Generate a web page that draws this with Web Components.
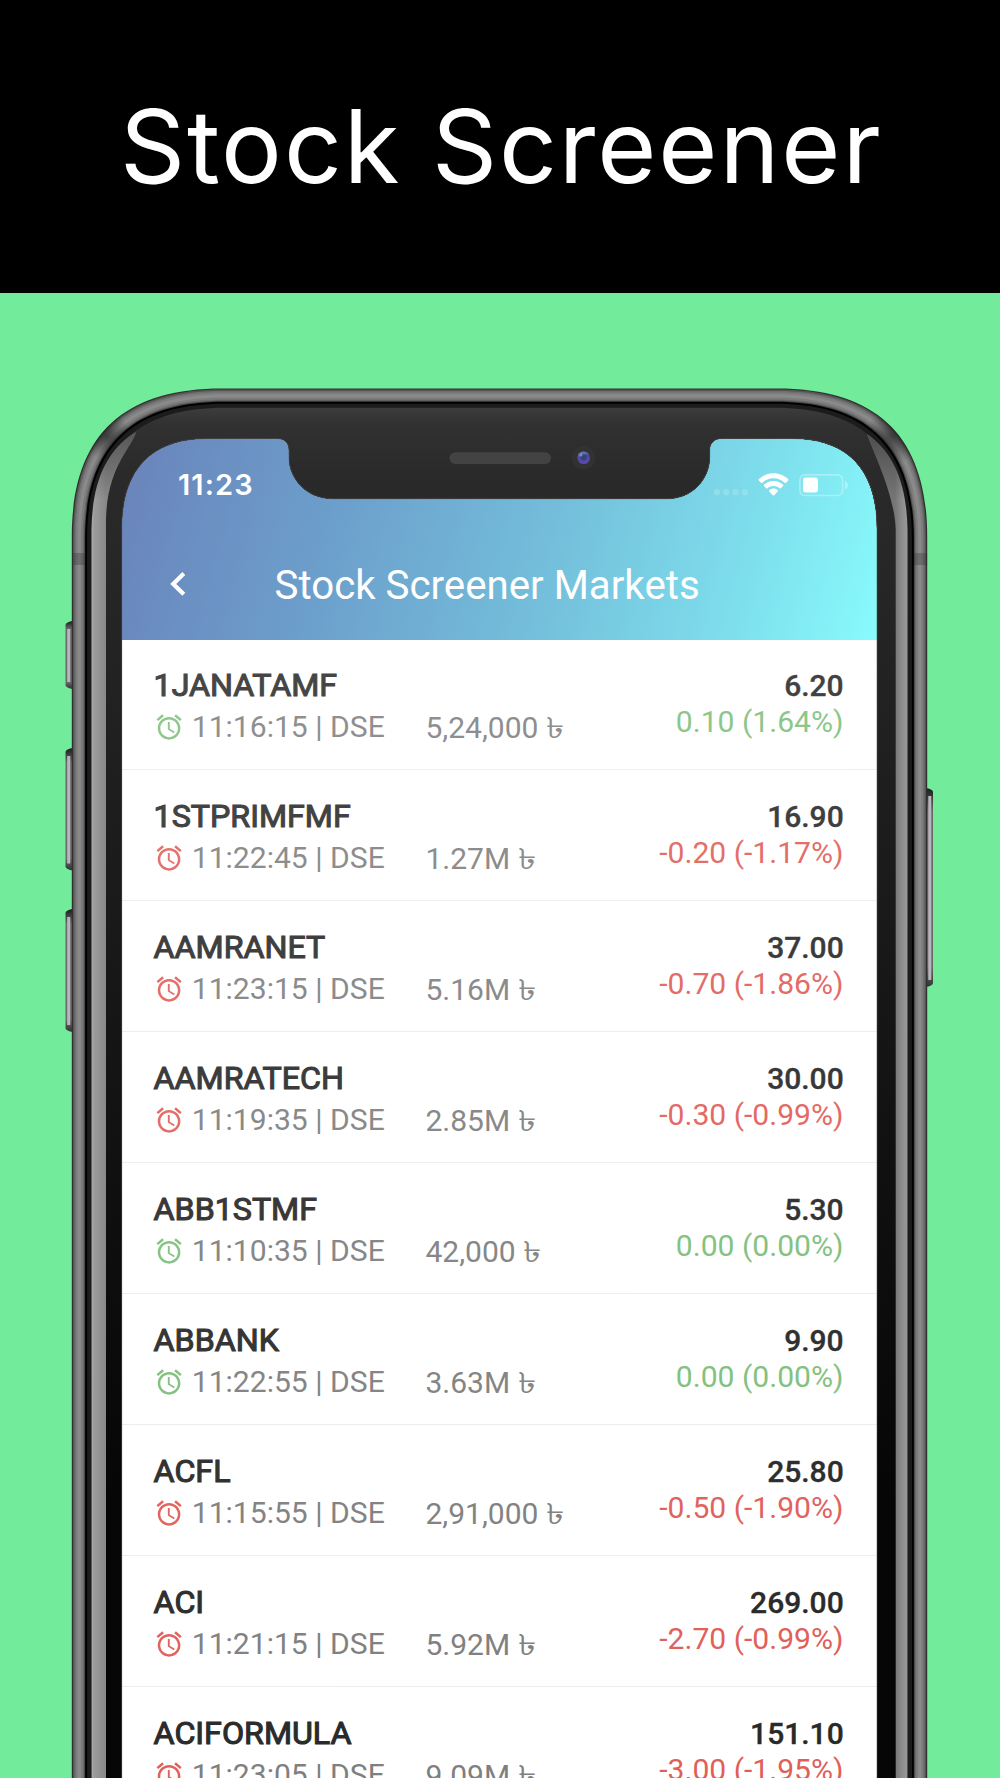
<!DOCTYPE html>
<html lang="en">
<head>
<meta charset="utf-8">
<title>Stock Screener</title>
<style>
  html, body { margin: 0; padding: 0; background: #72eb9b; overflow: hidden; }
  body { width: 1000px; height: 1778px; }
</style>
</head>
<body>
<promo-page></promo-page>

<template id="t-page">
  <style>
    :host { display: flex; flex-direction: column; width: 1000px; height: 1778px; overflow: hidden; background: #72eb9b; }
    header { flex: none; height: 293px; background: #000; display: flex; justify-content: center; box-sizing: border-box; padding: 84px 0 0 2.500px; }
    h1 { margin: 0; color: #fff; font: 400 101.500px/124px Inter, sans-serif; letter-spacing: 1.920px; white-space: nowrap; }
  </style>
  <header><h1>Stock Screener</h1></header>
  <phone-frame>
    <status-bar></status-bar>
    <app-bar>Stock Screener Markets</app-bar>
    <stock-list></stock-list>
  </phone-frame>
</template>

<template id="t-phone">
  <style>
    :host { display: grid; flex: none; width: 1000px; height: 1485px; overflow: hidden; }
    .screen, svg { grid-area: 1 / 1; }
    .screen { margin: 144px 0 0 121px; width: 757px; height: 1341px; overflow: hidden; background:
      linear-gradient(105deg, #6a83ba 0%, #6c9ecb 28%, #73bcda 55%, #7edfec 82%, #88fbfd 100%) 0 0 / 757px 204px no-repeat, #fff; }
    svg { display: block; width: 1000px; height: 1485px; z-index: 1; pointer-events: none; }
  </style>
  <div class="screen"><slot></slot></div>
  <svg viewBox="0 293 1000 1485"></svg>
</template>

<template id="t-status">
  <style>
    :host { display: flex; align-items: flex-start; height: 92px; box-sizing: border-box; padding: 33px 0 0 57px; color: #fff; }
    .time { font: 600 29px/34px Inter, sans-serif; letter-spacing: 1.100px; width: 536.500px; margin-top: -2px; }
  </style>
  <span class="time">11:23</span>
  <svg width="136" height="30" viewBox="715 470 136 30" fill="#fff" overflow="visible">
    <g opacity=".17"><circle cx="716.9" cy="492.3" r="3.2"/><circle cx="726.3" cy="492.3" r="3.2"/><circle cx="735.6" cy="492.3" r="3.2"/><circle cx="745" cy="492.3" r="3.2"/></g>
    <path d="M773.5 473.3c5.7 0 11 2.2 14.7 5.9.4.4.4 1 0 1.4l-2.2 2.2c-.4.4-1 .4-1.4 0-2.9-2.8-6.800-4.500-11.100-4.500s-8.200 1.700-11.100 4.500c-.4.4-1 .4-1.400 0l-2.200-2.200c-.4-.4-.4-1 0-1.400 3.700-3.700 9-5.900 14.700-5.900z"/>
    <path d="M773.500 480.900c3.700 0 7 1.400 9.500 3.700.4.4.4 1 0 1.400l-2.200 2.200c-.4.4-1 .4-1.400 0-1.600-1.400-3.700-2.300-5.900-2.300s-4.300.9-5.900 2.300c-.4.4-1 .4-1.400 0l-2.200-2.200c-.4-.4-.4-1 0-1.400 2.500-2.300 5.800-3.700 9.500-3.700z"/>
    <path d="M773.500 488.500c1.600 0 3.100.6 4.200 1.500.4.4.4 1 0 1.400l-3.500 3.800c-.4.4-1 .4-1.400 0l-3.500-3.800c-.4-.4-.4-1 0-1.400 1.100-.9 2.600-1.500 4.200-1.500z"/>
    <rect x="799.900" y="474.900" width="42.700" height="20.600" rx="5" fill="none" stroke="#fff" stroke-width="1.600" opacity=".32"/>
    <rect x="803" y="477.600" width="15" height="14.900" rx="2.400"/>
    <path d="M844.800 480.800c1.900.6 3.100 2.300 3.100 4.300s-1.200 3.700-3.100 4.300z" opacity=".35"/>
  </svg>
</template>

<template id="t-appbar">
  <style>
    :host { display: flex; align-items: center; height: 110.500px; box-sizing: border-box; padding: 0 0 1px 46.500px; color: #fff; font: 400 40.250px/48px Roboto, sans-serif; }
    svg { flex: none; display: block; margin-right: 88px; }
    span { white-space: nowrap; padding-top: 5px; }
  </style>
  <svg width="19" height="28" viewBox="168 570 19 28" fill="none" stroke="#fff" stroke-width="4.200"><path d="M183.800 573.500L173.200 583.900L183.800 594.300"/></svg>
  <span><slot></slot></span>
</template>

<template id="t-list">
  <style>
    :host { display: grid; height: 1139px; overflow: hidden; background: #fff; }
    .rows { grid-area: 1 / 1; }
    .glare { grid-area: 1 / 1; height: 1139px; z-index: 1; background: linear-gradient(165deg, rgba(255,255,255,.17), rgba(255,255,255,.03) 90%); }
  </style>
  <div class="rows"></div>
  <div class="glare"></div>
</template>

<template id="t-row">
  <style>
    :host { display: flex; justify-content: space-between; box-sizing: border-box; height: 130.940px; padding: 26.800px 34.500px 0 32.600px; border-bottom: 1.500px solid #ececec; font: 400 30px/36px Roboto, "Noto Sans", sans-serif; color: #7b7b7b; white-space: nowrap; --tone: #e05a54; }
    :host([up]) { --tone: #7abd77; }
    .left { display: flex; flex-direction: column; gap: 4.800px; }
    .name { font-size: 32.200px; line-height: 38px; color: #222; -webkit-text-stroke: 1.100px #222; }
    .meta { display: flex; align-items: flex-start; }
    .clock { flex: none; width: 30.200px; height: 30.200px; margin: 3.300px 8px 0 0; fill: var(--tone); }
    .time { width: 233.700px; font-size: 30.080px; }
    .vol { padding-top: 1.200px; }
    .taka { display: inline-block; line-height: 36px; transform: scale(1.220, .960); transform-origin: 0 80%; }
    .right { display: flex; flex-direction: column; align-items: flex-end; padding-top: 2.200px; }
    .price { font-weight: 500; color: #222; -webkit-text-stroke: .35px #222; margin-right: -.2px; }
    .chg { font-size: 30.100px; color: var(--tone); margin-top: -.2px; }
  </style>
  <div class="left">
    <span class="name"></span>
    <div class="meta">
      <svg class="clock" viewBox="0 0 24 24"><path d="M22 5.720l-4.600-3.860-1.290 1.530 4.600 3.860L22 5.720zM7.880 3.390L6.600 1.860 2 5.710l1.290 1.530 4.590-3.850zM12.500 8H11v6l4.750 2.850.75-1.230-4-2.370V8zM12 4c-4.970 0-9 4.030-9 9s4.020 9 9 9c4.970 0 9-4.030 9-9s-4.030-9-9-9zm0 16c-3.870 0-7-3.130-7-7s3.130-7 7-7 7 3.130 7 7-3.130 7-7 7z"/></svg>
      <span class="time"></span><span class="vol"><span class="amount"></span> <span class="taka">৳</span></span>
    </div>
  </div>
  <div class="right"><span class="price"></span><span class="chg"></span></div>
</template>

<script>
  class Base extends HTMLElement {
    constructor() {
      super();
      this.attachShadow({ mode: 'open' })
        .appendChild(document.getElementById(this.constructor.tpl).content.cloneNode(true));
    }
    $(s) { return this.shadowRoot.querySelector(s); }
  }

  // Outline with straight sides and two soft top corners, open at the bottom of the page.
  const shell = (l, r, t, w, h, k = 0.33) =>
    `M${l} 1800V${t + h}C${l} ${t + h * k} ${l + w * k} ${t} ${l + w} ${t}H${r - w}C${r - w * k} ${t} ${r} ${t + h * k} ${r} ${t + h}V1800Z`;

  const hole = 'M121.7 1800V528C121.7 470 151 438.500 207 438.500H277C285 438.500 289 443 289 450V457C289 480 308 498.700 332 498.700H668C691 498.700 709.700 480 709.700 457V450C709.700 443 714 438.500 722 438.500H792C848 438.500 877 470 877 528V1800Z';

  class PhoneFrame extends Base {
    static tpl = 't-phone';
    connectedCallback() {
      const L = 71.8, R = 927.2, T = 388.4;
      const ring = (i, fill) => `<path d="${shell(L + i, R - i, T + i, 150 - i * .85, 148 - i * .85)} ${hole}" fill-rule="evenodd" fill="${fill}"/>`;
      const key = (x, y, h, flip) => `<g transform="translate(${x} ${y})${flip ? ' scale(-1 1)' : ''}">
        <path d="M0 4Q0 1.500 6.800 0V${h}Q0 ${h - 1.500} 0 ${h - 4}Z" fill="url(#edge)"/>
        <rect x="1.700" y="8" width="3" height="${h - 15}" fill="#b9b6bb"/></g>`;
      this.$('svg').innerHTML = `
        <defs>
          <linearGradient id="edge" x2="0" y2="1"><stop stop-color="#1d1d1d"/><stop offset=".12" stop-color="#6c696d"/><stop offset=".9" stop-color="#6c696d"/><stop offset="1" stop-color="#333"/></linearGradient>
          <linearGradient id="bezel" gradientUnits="userSpaceOnUse" x1="0" y1="408" x2="0" y2="1500"><stop stop-color="#3c3c3c"/><stop offset=".015" stop-color="#313131"/><stop offset=".06" stop-color="#2a2a2a"/><stop offset=".3" stop-color="#202020"/><stop offset=".7" stop-color="#101010"/><stop offset="1" stop-color="#060606"/></linearGradient>
          <linearGradient id="glossL" gradientUnits="userSpaceOnUse" x1="91" y1="0" x2="106" y2="0"><stop stop-color="#b0b0b0"/><stop offset=".2" stop-color="#9c9c9c"/><stop offset="1" stop-color="#888"/></linearGradient>
          <linearGradient id="glossR" gradientUnits="userSpaceOnUse" x1="895" y1="0" x2="908" y2="0"><stop stop-color="#767676"/><stop offset=".5" stop-color="#8c8c8c"/><stop offset="1" stop-color="#9a9a9a"/></linearGradient>
          <linearGradient id="tip" gradientUnits="userSpaceOnUse" x1="0" y1="430" x2="0" y2="500"><stop stop-color="#222" stop-opacity=".5"/><stop offset="1" stop-color="#222" stop-opacity="0"/></linearGradient>
          <radialGradient id="dim"><stop stop-color="#222" stop-opacity=".7"/><stop offset="1" stop-color="#222" stop-opacity="0"/></radialGradient>
          <linearGradient id="lens" x2=".3" y2="1"><stop stop-color="#6f95c8"/><stop offset=".5" stop-color="#4a4a99"/><stop offset="1" stop-color="#5a4aae"/></linearGradient>
          <clipPath id="body"><path d="${shell(L, R, T, 150, 148)}"/></clipPath>
        </defs>
        ${key(65.500, 621, 68)}${key(65.500, 748, 122.500)}${key(65.500, 909, 123)}${key(933, 788, 199, true)}
        ${ring(0, '#303030')}${ring(1.200, '#555')}${ring(2.500, '#6e6e6e')}${ring(4, '#7e7e7e')}${ring(6, '#8a8a8a')}${ring(9, '#7c7c7c')}${ring(11, '#696969')}${ring(12.400, '#484848')}
        <g clip-path="url(#body)"><circle cx="107" cy="436" r="24" fill="url(#dim)"/><circle cx="893" cy="436" r="28" fill="url(#dim)"/>
          <path d="M72 553h13v12h-13zM914 553h14v12h-14z" fill="#333" opacity=".32"/></g>
        ${ring(13.300, '#000')}${ring(15.300, '#1c1c1c')}${ring(19.300, 'url(#bezel)')}
        <path d="M91.500 1800V530C92 488 103 452 136 432C133 446 107 466 106 520V1800Z" fill="url(#glossL)"/>
        <path d="M91.500 530C92 488 103 452 136 432C133 446 107 466 106 520V530Z" fill="url(#tip)"/>
        <path d="M907.500 1800V530C907 488 896 454 867 434C873 452 895 495 895.700 530V1800Z" fill="url(#glossR)"/>
        <path d="M907.500 530C907 488 896 454 867 434C873 452 895 495 895.700 530Z" fill="url(#tip)"/>
        <path d="M121.700 1800V528C121.700 470 151 438.500 207 438.500H277C285 438.500 289 443 289 450V457C289 480 308 498.700 332 498.700H668C691 498.700 709.700 480 709.700 457V450C709.700 443 714 438.500 722 438.500H792C848 438.500 877 470 877 528V1800" fill="none" stroke="#555" stroke-width=".8" opacity=".7"/>
        <rect x="449.500" y="452.300" width="101.500" height="11.600" rx="5.800" fill="#434343"/>
        <circle cx="583.700" cy="457.800" r="11.700" fill="#323232"/>
        <circle cx="583.700" cy="457.800" r="6.300" fill="url(#lens)"/>
        <circle cx="583.700" cy="457.500" r="3" fill="#35407c"/>
        <circle cx="581" cy="455" r="1.500" fill="#8ca9d2" opacity=".6"/>`;
    }
  }

  const rows = [
    ['1JANATAMF', '11:16:15', '5,24,000', '6.20', '0.10 (1.64%)', 1],
    ['1STPRIMFMF', '11:22:45', '1.27M', '16.90', '-0.20 (-1.17%)', 0],
    ['AAMRANET', '11:23:15', '5.16M', '37.00', '-0.70 (-1.86%)', 0],
    ['AAMRATECH', '11:19:35', '2.85M', '30.00', '-0.30 (-0.99%)', 0],
    ['ABB1STMF', '11:10:35', '42,000', '5.30', '0.00 (0.00%)', 1],
    ['ABBANK', '11:22:55', '3.63M', '9.90', '0.00 (0.00%)', 1],
    ['ACFL', '11:15:55', '2,91,000', '25.80', '-0.50 (-1.90%)', 0],
    ['ACI', '11:21:15', '5.92M', '269.00', '-2.70 (-0.99%)', 0],
    ['ACIFORMULA', '11:23:05', '9.09M', '151.10', '-3.00 (-1.95%)', 0]
  ];

  class StockRow extends Base {
    static tpl = 't-row';
    set data([name, time, vol, price, chg, up]) {
      this.toggleAttribute('up', !!up);
      this.$('.name').textContent = name;
      this.$('.time').textContent = `${time} | DSE`;
      this.$('.amount').textContent = vol;
      this.$('.price').textContent = price;
      this.$('.chg').textContent = chg;
    }
  }

  class StockList extends Base {
    static tpl = 't-list';
    connectedCallback() {
      for (const r of rows) {
        const el = document.createElement('stock-row');
        el.data = r;
        this.$('.rows').append(el);
      }
    }
  }

  class StatusBar extends Base { static tpl = 't-status'; }
  class AppBar extends Base { static tpl = 't-appbar'; }
  class PromoPage extends Base { static tpl = 't-page'; }

  customElements.define('stock-row', StockRow);
  customElements.define('stock-list', StockList);
  customElements.define('status-bar', StatusBar);
  customElements.define('app-bar', AppBar);
  customElements.define('phone-frame', PhoneFrame);
  customElements.define('promo-page', PromoPage);
</script>
</body>
</html>
